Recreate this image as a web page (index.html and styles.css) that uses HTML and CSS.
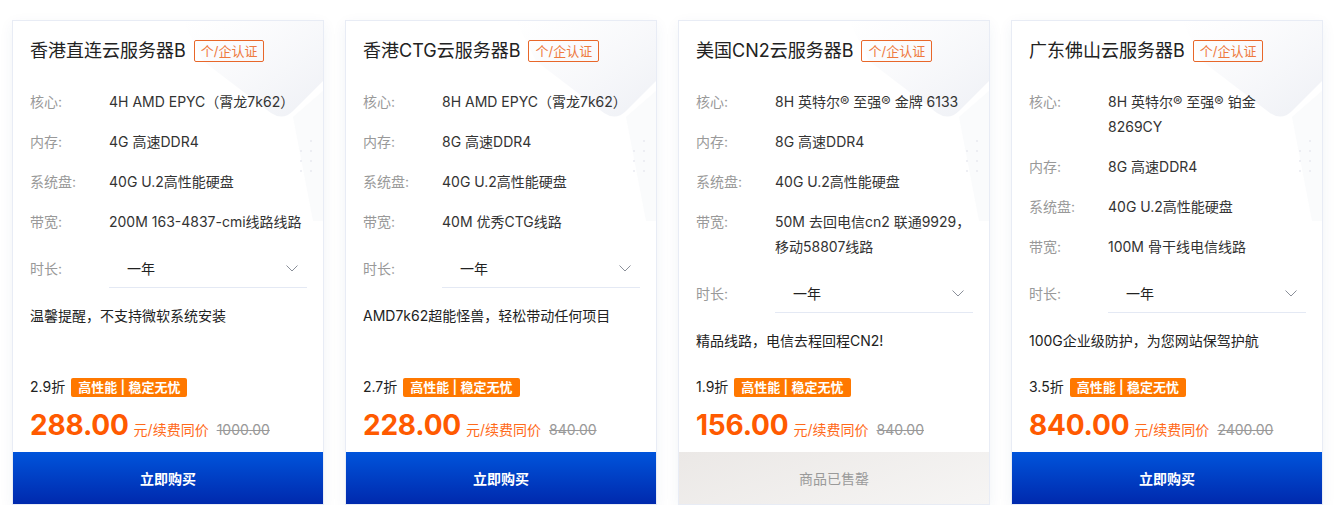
FILE: index.html
```html
<!DOCTYPE html>
<html lang="zh-CN">
<head>
<meta charset="utf-8">
<title>云服务器</title>
<link rel="stylesheet" href="styles.css">
</head>
<body>
<div class="list">
  <div class="card">
    <svg class="deco" width="180" height="200" viewBox="0 0 180 200"><defs><linearGradient id="g1" x1="0" y1="0" x2="1" y2="1"><stop offset="0" stop-color="#f4f5f9" stop-opacity="0"/><stop offset="1" stop-color="#eef0f5"/></linearGradient></defs><path d="M40 0 L180 0 L180 60 L150 90 Q140 100 128 92 L60 40 Z" fill="url(#g1)"/><path d="M150 96 L180 70 L180 200 L170 200 Z" fill="#fafbfc"/><g fill="#e8eaf0"><circle cx="168" cy="120" r="1"/><circle cx="168" cy="130" r="1"/><circle cx="168" cy="140" r="1"/><circle cx="168" cy="150" r="1"/><circle cx="158" cy="130" r="1"/><circle cx="158" cy="140" r="1"/><circle cx="158" cy="150" r="1"/></g></svg>
    <div class="body">
      <div class="head"><span class="title">香港直连云服务器B</span><span class="cert">个/企认证</span></div>
      <div class="specs">
        <div class="row"><span class="lbl">核心:</span><span class="val">4H AMD EPYC（霄龙7k62）</span></div>
        <div class="row"><span class="lbl">内存:</span><span class="val">4G 高速DDR4</span></div>
        <div class="row"><span class="lbl">系统盘:</span><span class="val">40G U.2高性能硬盘</span></div>
        <div class="row"><span class="lbl">带宽:</span><span class="val">200M 163-4837-cmi线路线路</span></div>
        <div class="row sel-row"><span class="lbl">时长:</span><div class="select"><span>一年</span><svg class="chev" width="12" height="7" viewBox="0 0 12 7"><path d="M0.5 0.5 L6 6 L11.5 0.5" fill="none" stroke="#8a8f99" stroke-width="1"/></svg></div></div>
      </div>
      <p class="note">温馨提醒，不支持微软系统安装</p>
      <div class="bottom">
        <div class="disc"><span>2.9折</span><span class="tag">高性能 | 稳定无忧</span></div>
        <div class="price"><span class="num">288.00</span><span class="unit">元/续费同价</span><span class="old">1000.00</span></div>
      </div>
    </div>
    <div class="btn">立即购买</div>
  </div>

  <div class="card">
    <svg class="deco" width="180" height="200" viewBox="0 0 180 200"><defs><linearGradient id="g2" x1="0" y1="0" x2="1" y2="1"><stop offset="0" stop-color="#f4f5f9" stop-opacity="0"/><stop offset="1" stop-color="#eef0f5"/></linearGradient></defs><path d="M40 0 L180 0 L180 60 L150 90 Q140 100 128 92 L60 40 Z" fill="url(#g2)"/><path d="M150 96 L180 70 L180 200 L170 200 Z" fill="#fafbfc"/><g fill="#e8eaf0"><circle cx="168" cy="120" r="1"/><circle cx="168" cy="130" r="1"/><circle cx="168" cy="140" r="1"/><circle cx="168" cy="150" r="1"/><circle cx="158" cy="130" r="1"/><circle cx="158" cy="140" r="1"/><circle cx="158" cy="150" r="1"/></g></svg>
    <div class="body">
      <div class="head"><span class="title">香港CTG云服务器B</span><span class="cert">个/企认证</span></div>
      <div class="specs">
        <div class="row"><span class="lbl">核心:</span><span class="val">8H AMD EPYC（霄龙7k62）</span></div>
        <div class="row"><span class="lbl">内存:</span><span class="val">8G 高速DDR4</span></div>
        <div class="row"><span class="lbl">系统盘:</span><span class="val">40G U.2高性能硬盘</span></div>
        <div class="row"><span class="lbl">带宽:</span><span class="val">40M 优秀CTG线路</span></div>
        <div class="row sel-row"><span class="lbl">时长:</span><div class="select"><span>一年</span><svg class="chev" width="12" height="7" viewBox="0 0 12 7"><path d="M0.5 0.5 L6 6 L11.5 0.5" fill="none" stroke="#8a8f99" stroke-width="1"/></svg></div></div>
      </div>
      <p class="note">AMD7k62超能怪兽，轻松带动任何项目</p>
      <div class="bottom">
        <div class="disc"><span>2.7折</span><span class="tag">高性能 | 稳定无忧</span></div>
        <div class="price"><span class="num">228.00</span><span class="unit">元/续费同价</span><span class="old">840.00</span></div>
      </div>
    </div>
    <div class="btn">立即购买</div>
  </div>

  <div class="card">
    <svg class="deco" width="180" height="200" viewBox="0 0 180 200"><defs><linearGradient id="g3" x1="0" y1="0" x2="1" y2="1"><stop offset="0" stop-color="#f4f5f9" stop-opacity="0"/><stop offset="1" stop-color="#eef0f5"/></linearGradient></defs><path d="M40 0 L180 0 L180 60 L150 90 Q140 100 128 92 L60 40 Z" fill="url(#g3)"/><path d="M150 96 L180 70 L180 200 L170 200 Z" fill="#fafbfc"/><g fill="#e8eaf0"><circle cx="168" cy="120" r="1"/><circle cx="168" cy="130" r="1"/><circle cx="168" cy="140" r="1"/><circle cx="168" cy="150" r="1"/><circle cx="158" cy="130" r="1"/><circle cx="158" cy="140" r="1"/><circle cx="158" cy="150" r="1"/></g></svg>
    <div class="body">
      <div class="head"><span class="title">美国CN2云服务器B</span><span class="cert">个/企认证</span></div>
      <div class="specs">
        <div class="row"><span class="lbl">核心:</span><span class="val">8H 英特尔® 至强® 金牌 6133</span></div>
        <div class="row"><span class="lbl">内存:</span><span class="val">8G 高速DDR4</span></div>
        <div class="row"><span class="lbl">系统盘:</span><span class="val">40G U.2高性能硬盘</span></div>
        <div class="row"><span class="lbl">带宽:</span><span class="val">50M 去回电信cn2 联通9929，移动58807线路</span></div>
        <div class="row sel-row"><span class="lbl">时长:</span><div class="select"><span>一年</span><svg class="chev" width="12" height="7" viewBox="0 0 12 7"><path d="M0.5 0.5 L6 6 L11.5 0.5" fill="none" stroke="#8a8f99" stroke-width="1"/></svg></div></div>
      </div>
      <p class="note">精品线路，电信去程回程CN2!</p>
      <div class="bottom">
        <div class="disc"><span>1.9折</span><span class="tag">高性能 | 稳定无忧</span></div>
        <div class="price"><span class="num">156.00</span><span class="unit">元/续费同价</span><span class="old">840.00</span></div>
      </div>
    </div>
    <div class="btn sold">商品已售罄</div>
  </div>

  <div class="card">
    <svg class="deco" width="180" height="200" viewBox="0 0 180 200"><defs><linearGradient id="g4" x1="0" y1="0" x2="1" y2="1"><stop offset="0" stop-color="#f4f5f9" stop-opacity="0"/><stop offset="1" stop-color="#eef0f5"/></linearGradient></defs><path d="M40 0 L180 0 L180 60 L150 90 Q140 100 128 92 L60 40 Z" fill="url(#g4)"/><path d="M150 96 L180 70 L180 200 L170 200 Z" fill="#fafbfc"/><g fill="#e8eaf0"><circle cx="168" cy="120" r="1"/><circle cx="168" cy="130" r="1"/><circle cx="168" cy="140" r="1"/><circle cx="168" cy="150" r="1"/><circle cx="158" cy="130" r="1"/><circle cx="158" cy="140" r="1"/><circle cx="158" cy="150" r="1"/></g></svg>
    <div class="body">
      <div class="head"><span class="title">广东佛山云服务器B</span><span class="cert">个/企认证</span></div>
      <div class="specs">
        <div class="row"><span class="lbl">核心:</span><span class="val">8H 英特尔® 至强® 铂金 8269CY</span></div>
        <div class="row"><span class="lbl">内存:</span><span class="val">8G 高速DDR4</span></div>
        <div class="row"><span class="lbl">系统盘:</span><span class="val">40G U.2高性能硬盘</span></div>
        <div class="row"><span class="lbl">带宽:</span><span class="val">100M 骨干线电信线路</span></div>
        <div class="row sel-row"><span class="lbl">时长:</span><div class="select"><span>一年</span><svg class="chev" width="12" height="7" viewBox="0 0 12 7"><path d="M0.5 0.5 L6 6 L11.5 0.5" fill="none" stroke="#8a8f99" stroke-width="1"/></svg></div></div>
      </div>
      <p class="note">100G企业级防护，为您网站保驾护航</p>
      <div class="bottom">
        <div class="disc"><span>3.5折</span><span class="tag">高性能 | 稳定无忧</span></div>
        <div class="price"><span class="num">840.00</span><span class="unit">元/续费同价</span><span class="old">2400.00</span></div>
      </div>
    </div>
    <div class="btn">立即购买</div>
  </div>
</div>
</body>
</html>
```

FILE: styles.css
```css
* { box-sizing: border-box; }
body {
  margin: 0;
  background: #fff;
  font-family: Inter, "Noto Sans CJK SC", sans-serif;
  color: #333;
}
.list {
  display: flex;
  gap: 21px;
  padding: 20px 0 0 12px;
}
.card {
  position: relative;
  width: 312px;
  height: 485px;
  border: 1px solid #e8ecf5;
  background: #fff;
  box-shadow: 0 4px 14px rgba(40, 60, 120, 0.06);
  display: flex;
  flex-direction: column;
  overflow: hidden;
}
.deco {
  position: absolute;
  top: 0;
  right: 0;
  z-index: 0;
}
.body {
  position: relative;
  z-index: 1;
  flex: 1;
  display: flex;
  flex-direction: column;
  padding: 18px 16px 10px 17px;
}
.head {
  display: flex;
  align-items: center;
  height: 24px;
}
.title {
  font-size: 18px;
  line-height: 24px;
  color: #222;
}
.cert {
  margin-left: 8px;
  height: 22px;
  line-height: 20px;
  padding: 0 6px;
  border: 1px solid #e8672a;
  border-radius: 2px;
  color: #ee7a3e;
  font-size: 13px;
}
.specs {
  margin-top: 26px;
}
.row {
  display: flex;
  font-size: 14px;
  line-height: 25px;
  margin-bottom: 15px;
}
.lbl {
  width: 79px;
  flex: none;
  color: #999;
}
.val {
  flex: 1;
  color: #333;
}
.sel-row {
  align-items: center;
  margin-bottom: 0;
}
.select {
  width: 199px;
  height: 39px;
  border-bottom: 1px solid #e4e9f4;
  display: flex;
  align-items: center;
  justify-content: space-between;
  padding: 0 9px 0 18px;
  color: #222;
}
.chev { display: block; }
.note {
  margin: 15px 0 0;
  font-size: 14px;
  line-height: 25px;
  color: #222;
}
.bottom {
  margin-top: auto;
}
.disc {
  display: flex;
  align-items: center;
  gap: 6px;
  font-size: 14px;
  line-height: 20px;
  color: #222;
}
.tag {
  height: 19px;
  line-height: 19px;
  padding: 0 7px;
  background: #ff7800;
  color: #fff;
  font-size: 13px;
  font-weight: 600;
  border-radius: 2px;
}
.price {
  margin-top: 11px;
  display: flex;
  align-items: baseline;
  height: 34px;
}
.num {
  font-size: 28px;
  line-height: 34px;
  font-weight: 700;
  letter-spacing: -0.2px;
  color: #ff5a00;
}
.unit {
  margin-left: 5px;
  font-size: 14px;
  color: #ff6a1a;
}
.old {
  margin-left: 8px;
  font-size: 14px;
  color: #999;
  text-decoration: line-through;
}
.btn {
  position: relative;
  z-index: 1;
  height: 52px;
  flex: none;
  display: flex;
  align-items: center;
  justify-content: center;
  background: linear-gradient(180deg, #0054db 0%, #0029ad 100%);
  color: #fff;
  font-size: 14px;
  font-weight: 600;
}
.btn.sold {
  background: linear-gradient(160deg, #ebe8e6 0%, #f6f5f4 100%);
  color: #9a9a9a;
  font-weight: 400;
}
```
